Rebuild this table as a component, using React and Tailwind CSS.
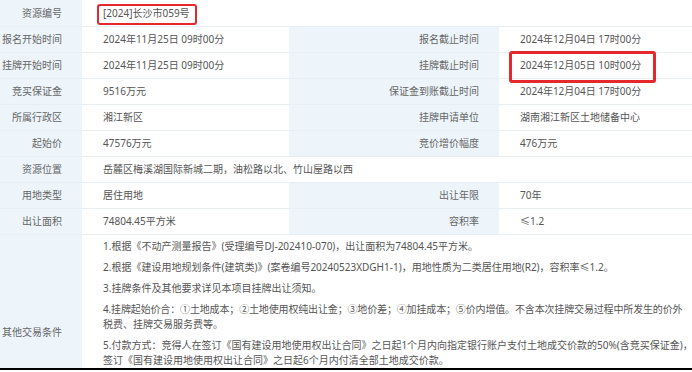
import React from "react";

const L = "bg-[#edf5fb] text-[#666] text-right pr-[20px] flex items-center justify-end border-b border-[#e9eef2]";
const V = "bg-white text-[#555] pl-[21px] flex items-center border-b border-[#e9eef2] whitespace-nowrap";

function Row({ h = "h-[26px]", children }) {
  return <div className={`grid grid-cols-[82px_207px_210px_1fr] shrink-0 ${h}`}>{children}</div>;
}

export default function App() {
  const paras = [
    [["1.根据《不动产测量报告》(受理编号DJ-202410-070)，出让面积为74804.45平方米。", ""]],
    [["2.根据《建设用地规划条件(建筑类)》(案卷编号20240523XDGH1-1)，用地性质为二类居住用地(R2)，容积率≤1.2。", ""]],
    [["3.挂牌条件及其他要求详见本项目挂牌出让须知。", ""]],
    [
      ["4.挂牌起始价合：①土地成本；②土地使用权纯出让金；③地价差；④加挂成本；⑤价内增值。不含本次挂牌交易过程中所发生的价外", "tracking-[-0.15px]"],
      ["税费、挂牌交易服务费等。", ""],
    ],
    [
      ["5.付款方式：竞得人在签订《国有建设用地使用权出让合同》之日起1个月内向指定银行账户支付土地成交价款的50%(含竞买保证金)，", ""],
      ["签订《国有建设用地使用权出让合同》之日起6个月内付清全部土地成交价款。", ""],
    ],
  ];
  return (
    <div className="w-[692px] h-[372px] overflow-hidden bg-white font-['Noto_Sans','Noto_Sans_CJK_SC',sans-serif] text-[10px] leading-[15px]">
      <div className="h-[368px] overflow-hidden flex flex-col">
        <Row h="h-[27px]">
          <div className={L}>资源编号</div>
          <div className={`${V} col-span-3 relative`}>
            <span>[2024]长沙市059号</span>
            <div className="absolute left-[15px] top-[4px] w-[100px] h-[21px] border-2 border-[#e5282c] rounded-[3px]" />
          </div>
        </Row>
        <Row>
          <div className={L}>报名开始时间</div>
          <div className={V}>2024年11月25日 09时00分</div>
          <div className={L}>报名截止时间</div>
          <div className={V}>2024年12月04日 17时00分</div>
        </Row>
        <Row>
          <div className={L}>挂牌开始时间</div>
          <div className={V}>2024年11月25日 09时00分</div>
          <div className={L}>挂牌截止时间</div>
          <div className={`${V} relative`}>
            <span>2024年12月05日 10时00分</span>
            <div className="absolute left-[10px] top-[-2px] w-[147px] h-[32px] border-[3px] border-[#e5282c] rounded-[3px]" />
          </div>
        </Row>
        <Row>
          <div className={L}>竞买保证金</div>
          <div className={V}>9516万元</div>
          <div className={L}>保证金到账截止时间</div>
          <div className={V}>2024年12月04日 17时00分</div>
        </Row>
        <Row>
          <div className={L}>所属行政区</div>
          <div className={V}>湘江新区</div>
          <div className={L}>挂牌申请单位</div>
          <div className={V}>湖南湘江新区土地储备中心</div>
        </Row>
        <Row>
          <div className={L}>起始价</div>
          <div className={V}>47576万元</div>
          <div className={L}>竞价增价幅度</div>
          <div className={V}>476万元</div>
        </Row>
        <Row>
          <div className={L}>资源位置</div>
          <div className={`${V} col-span-3`}>岳麓区梅溪湖国际新城二期，油松路以北、竹山屋路以西</div>
        </Row>
        <Row>
          <div className={L}>用地类型</div>
          <div className={V}>居住用地</div>
          <div className={L}>出让年限</div>
          <div className={V}>70年</div>
        </Row>
        <Row>
          <div className={L}>出让面积</div>
          <div className={V}>74804.45平方米</div>
          <div className={L}>容积率</div>
          <div className={V}>≤1.2</div>
        </Row>
        <div className="grid grid-cols-[82px_1fr] min-h-[196px] shrink-0">
          <div className={L}>其他交易条件</div>
          <div className="bg-white text-[#555] pl-[21px] pt-[4px] flex flex-col gap-[6px] border-b border-[#e9eef2]">
            {paras.map((lines, i) => (
              <div key={i}>
                {lines.map(([t, c], j) => (
                  <div key={j} className={`whitespace-nowrap ${c}`}>{t}</div>
                ))}
              </div>
            ))}
          </div>
        </div>
      </div>
      <div className="h-[2px] bg-black" />
      <div className="h-[2px] bg-white" />
    </div>
  );
}
